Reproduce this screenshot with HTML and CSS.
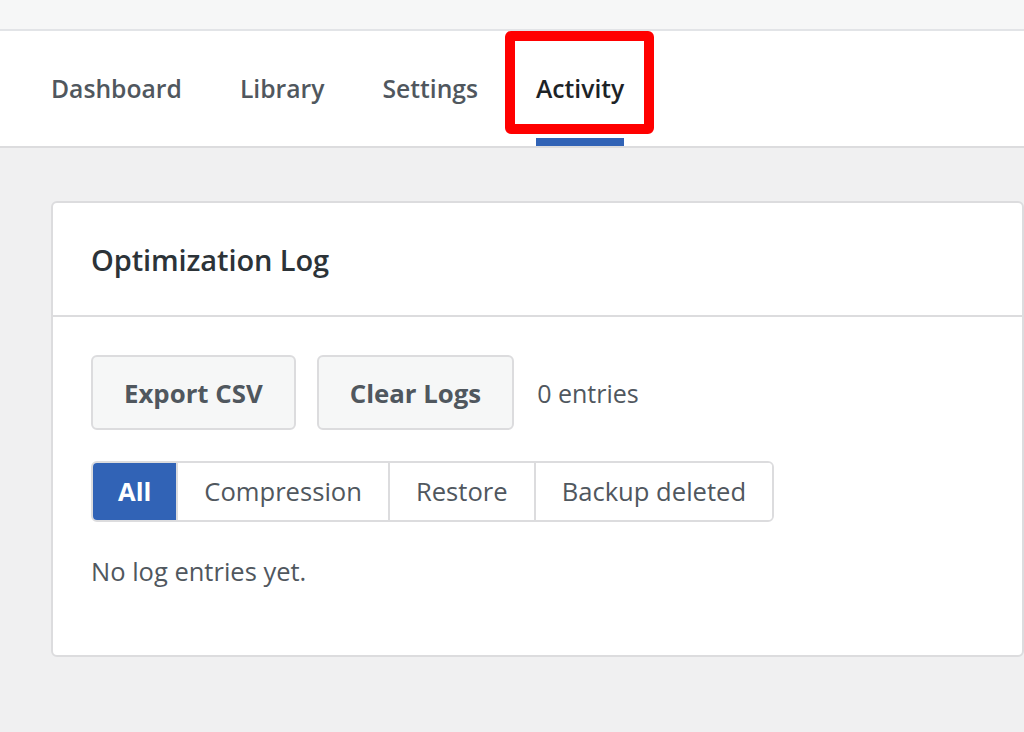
FILE: index.html
```html
<!DOCTYPE html>
<html lang="en">
<head>
<meta charset="utf-8">
<title>Optimization Log</title>
<link rel="stylesheet" href="styles.css">
</head>
<body>
  <div class="topbar"></div>
  <nav class="nav">
    <a class="tab">Dashboard</a>
    <a class="tab">Library</a>
    <a class="tab">Settings</a>
    <a class="tab is-active">Activity<span class="highlight"></span></a>
  </nav>
  <main class="main">
    <section class="card">
      <header class="card-header">
        <h2 class="card-title">Optimization Log</h2>
      </header>
      <div class="card-body">
        <div class="actions">
          <button class="btn">Export CSV</button>
          <button class="btn">Clear Logs</button>
          <span class="count">0 entries</span>
        </div>
        <div class="segments">
          <button class="seg is-active">All</button>
          <button class="seg">Compression</button>
          <button class="seg">Restore</button>
          <button class="seg">Backup deleted</button>
        </div>
        <p class="empty">No log entries yet.</p>
      </div>
    </section>
  </main>
</body>
</html>
```

FILE: styles.css
```css
* { box-sizing: border-box; }

html, body {
  margin: 0;
  padding: 0;
}

body {
  background: #f0f0f1;
  font-family: "Open Sans", "Noto Sans", sans-serif;
  color: #50575e;
  width: 1024px;
  height: 732px;
  overflow: hidden;
}

.topbar {
  height: 31px;
  background: #f6f7f7;
  border-bottom: 2px solid #e2e4e7;
}

.nav {
  display: flex;
  gap: 58px;
  height: 117px;
  padding-left: 51px;
  background: #fff;
  border-bottom: 2px solid #dcdcde;
}

.tab {
  position: relative;
  display: flex;
  align-items: center;
  padding-top: 8px;
  border-bottom: 8px solid transparent;
  font-size: 24.7px;
  font-weight: 600;
  color: #50575e;
  cursor: pointer;
}

.tab.is-active {
  color: #1d2327;
  border-bottom-color: #3163b6;
}

.highlight {
  position: absolute;
  left: -31px;
  top: 0;
  width: 149px;
  height: 103px;
  border: 10px solid #ff0000;
  border-radius: 6px;
  pointer-events: none;
}

.main {
  padding: 53px 0 0 51px;
}

.card {
  background: #fff;
  border: 2px solid #dcdcde;
  border-radius: 6px;
}

.card-header {
  height: 114px;
  display: flex;
  align-items: center;
  padding-left: 38px;
  border-bottom: 2px solid #dcdcde;
}

.card-title {
  margin: 0;
  font-size: 29px;
  font-weight: 600;
  color: #2c3338;
  letter-spacing: -0.1px;
}

.card-body {
  padding: 38px 38px 67px;
}

.actions {
  display: flex;
  align-items: center;
  gap: 21px;
}

.btn {
  height: 75px;
  padding: 0 31px;
  background: #f6f7f7;
  border: 2px solid #dcdcde;
  border-radius: 6px;
  font-family: inherit;
  font-size: 25.8px;
  font-weight: 700;
  color: #50575e;
}

.count {
  margin-left: 2px;
  font-size: 25px;
}

.segments {
  display: inline-flex;
  margin-top: 31px;
  height: 61px;
  border: 2px solid #dcdcde;
  border-radius: 6px;
  overflow: hidden;
}

.seg {
  padding: 0 26px;
  background: #fff;
  border: 0;
  border-left: 2px solid #dcdcde;
  font-family: inherit;
  font-size: 25.6px;
  color: #50575e;
}

.seg:first-child {
  border-left: 0;
  padding: 0 25px;
}

.seg.is-active {
  background: #3163b6;
  color: #fff;
  font-weight: 700;
}

.empty {
  margin: 32px 0 0;
  font-size: 25.5px;
  line-height: 34px;
}
```
